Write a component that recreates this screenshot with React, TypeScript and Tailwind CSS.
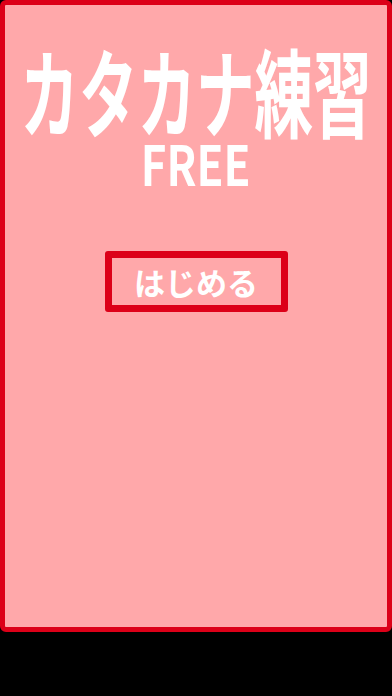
export default function App() {
  return (
    <div className="h-[696px] w-[392px] bg-black overflow-hidden">
      <div
        className="h-[632px] w-[392px] border-[5px] border-[#dc0018] bg-[#ffa8aa] rounded-[6px] flex flex-col items-center"
        style={{ fontFamily: '"Noto Sans CJK JP", "Noto Sans", sans-serif' }}
      >
        <div className="mt-[34px] h-[100px] flex items-center justify-center">
          <span className="whitespace-nowrap text-[96px] font-bold leading-[96px] text-white scale-x-[0.61] inline-block">
            カタカナ練習
          </span>
        </div>
        <div className="h-[46px] flex items-center justify-center">
          <span className="whitespace-nowrap text-[55px] font-bold leading-[46px] text-white scale-x-[0.8] inline-block">
            FREE
          </span>
        </div>
        <div className="mt-[66px] h-[61px] w-[183px] border-[7px] border-[#dc0018] rounded-[3px] flex items-center justify-center">
          <span className="text-[31px] font-bold leading-none text-white">はじめる</span>
        </div>
      </div>
    </div>
  );
}
